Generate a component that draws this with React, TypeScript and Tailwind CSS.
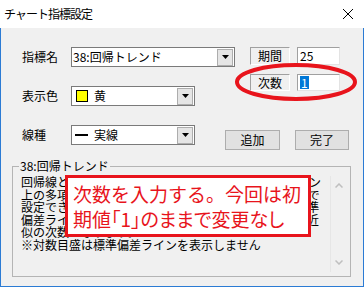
import React from "react";

function DropButton() {
  return (
    <div className="ml-auto mr-px flex h-[17px] w-[16px] items-center justify-center border border-[#adadad] bg-[#e5e5e5]">
      <svg width="7" height="4" viewBox="0 0 7 4">
        <path d="M0 0h7L3.5 4z" fill="#000" />
      </svg>
    </div>
  );
}

function Combo({ className, children }: { className: string; children: React.ReactNode }) {
  return (
    <div className={`flex h-[20px] items-center border border-[#7a7a7a] bg-white ${className}`}>
      {children}
      <DropButton />
    </div>
  );
}

function StaticBox({ children }: { children: React.ReactNode }) {
  return (
    <div className="flex h-full w-[40px] items-center justify-center border-t border-l border-[#a0a0a0] border-r border-b border-r-white border-b-white">
      {children}
    </div>
  );
}

function Input({ children }: { children: React.ReactNode }) {
  return (
    <div className="ml-[7px] flex h-full w-[43px] items-center border border-[#a0a0a0] border-b-[#e3e3e3] border-r-[#e3e3e3] bg-white pl-[2px]">
      {children}
    </div>
  );
}

function Button({ label, w }: { label: string; w: string }) {
  return (
    <div className={`flex h-[20px] items-center justify-center border border-[#adadad] bg-[#e1e1e1] ${w}`}>
      {label}
    </div>
  );
}

// text under the callout is hidden in the original, only the edges show
const lines = [
  "回帰線とは期間内の価格を最小二乗法で近似したライン",
  "上の多項式で近似します。次数は１から９までの範囲で",
  "設定できます。次数を大きくすると細かく曲がり、標準",
  "偏差ラインもそれに沿って表示されます。１で直線の近",
  "似の次数となります。",
  "※対数目盛は標準偏差ラインを表示しません",
];

export default function App() {
  return (
    <div className="w-[364px] bg-white font-['Noto_Sans_CJK_JP',sans-serif] text-[12px] text-black">
      <div className="flex h-[28px] items-center justify-between bg-white pl-[4px] pr-[11px]">
        <span className="text-[12px] leading-[14px] tracking-[-1px]">チャート指標設定</span>
        <svg width="10" height="10" viewBox="0 0 10 10">
          <path d="M0 0L10 10M10 0L0 10" stroke="#000" strokeWidth="1" />
        </svg>
      </div>

      <div className="relative flex h-[259px] flex-col border-x border-b border-[#2b7bd4] bg-[#f0f0f0] pt-[19px] leading-[14px]">
        <div className="flex items-start pl-[21px]">
          <span className="w-[49px] leading-[20px]">指標名</span>
          <Combo className="w-[164px] pl-px">
            <span>38:回帰トレンド</span>
          </Combo>
          <div className="ml-[15px] flex h-[18px]">
            <StaticBox>期間</StaticBox>
            <Input>25</Input>
          </div>
        </div>

        <div className="mt-[7px] flex">
          <div className="flex flex-col pl-[21px] pt-[12px]">
            <div className="flex items-center">
              <span className="w-[49px] leading-[20px]">表示色</span>
              <Combo className="w-[124px] pl-[4px]">
                <span className="h-[12px] w-[12px] border border-black bg-[#ffff00]" />
                <span className="ml-[6px]">黄</span>
              </Combo>
            </div>
            <div className="mt-[19px] flex items-center">
              <span className="w-[49px] leading-[20px]">線種</span>
              <Combo className="w-[124px] pl-[3px]">
                <span className="h-[2px] w-[13px] bg-black" />
                <span className="ml-[6px]">実線</span>
              </Combo>
            </div>
          </div>

          <div className="ml-[30px] flex flex-col">
            <div className="ml-[25px] flex h-[17px]">
              <StaticBox>次数</StaticBox>
              <Input>
                <span className="bg-[#0078d7] px-px leading-[13px] text-white">1</span>
              </Input>
            </div>
            <div className="mt-[39px] flex gap-[15px]">
              <Button label="追加" w="w-[55px]" />
              <Button label="完了" w="w-[54px]" />
            </div>
          </div>
        </div>

        <fieldset className="ml-[11px] mt-[10px] h-[117px] w-[339px] border border-[#b4b4b4]">
          <legend className="ml-[6px] px-px leading-[12px]">38:回帰トレンド</legend>
          <div className="mt-[4px] mr-[3px] flex h-[96px]">
            <div className="ml-[8px] flex-1 overflow-hidden leading-[12.5px]">
              {lines.map((l) => (
                <div key={l} className="whitespace-nowrap">
                  {l}
                </div>
              ))}
            </div>
            <div className="flex w-[17px] flex-col items-center justify-between border-l border-[#e6e6e6] py-[7px]">
              <svg width="8" height="5" viewBox="0 0 8 5">
                <path d="M0.5 4.5L4 1L7.5 4.5" stroke="#bfbfbf" strokeWidth="1.5" fill="none" />
              </svg>
              <svg width="8" height="5" viewBox="0 0 8 5">
                <path d="M0.5 0.5L4 4L7.5 0.5" stroke="#bfbfbf" strokeWidth="1.5" fill="none" />
              </svg>
            </div>
          </div>
        </fieldset>

        <div className="absolute left-[64px] top-[147px] h-[62px] w-[246px] border-[3px] border-[#e8141c] bg-white pl-[5px] pt-[3px] text-[19px] leading-[25px] text-[#e8141c]">
          <div className="whitespace-nowrap">次数を入力する。今回は初</div>
          <div className="whitespace-nowrap [font-feature-settings:'palt']">期値「1」のままで変更なし</div>
        </div>

        <svg className="absolute left-[232px] top-[33px]" width="126" height="42" viewBox="0 0 126 42">
          <ellipse cx="63" cy="21" rx="59" ry="17" fill="none" stroke="#e8141c" strokeWidth="4" />
        </svg>
      </div>
    </div>
  );
}
